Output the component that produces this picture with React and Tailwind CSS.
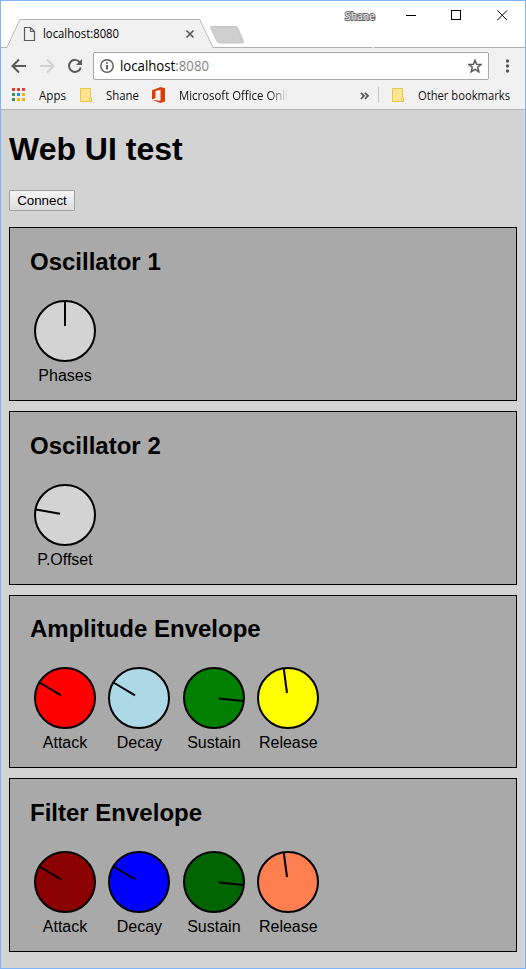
import React from "react";

const UI = "font-['Open_Sans',sans-serif]";

function Label({ width, className = "", children }) {
  return (
    <svg width={width} height="18" className={`shrink-0 overflow-visible ${UI} ${className}`}>
      <text x="0" y="13" fontSize="12" textLength={width} lengthAdjust="spacingAndGlyphs" fill="currentColor">
        {children}
      </text>
    </svg>
  );
}

function TitleBar() {
  return (
    <div className="relative h-[47px] bg-white">
      <svg width="524" height="47" className="absolute left-0 top-0" fill="none">
        <path d="M0 46.5H6L19 18.5H198.5L212 46.5H371.5M373 46.5H524" stroke="#b0b0b0" />
        <path d="M6.5 47L19.3 19H198.2L211.5 47Z" fill="#f1f1f1" />
        <path d="M209.500 26.500Q208.500 25.500 210.500 25.500H234.500Q236 25.500 236.800 27L242.500 40.500Q243 42 241 42H218.500Q217 42 216 40.500Z" fill="#cfcfcf" stroke="#bdbdbd" strokeWidth=".8" />
        <path d="M23.500 26.500H29.500L33.500 30.500V39.500H23.500ZM29.500 26.500V30.500H33.500" stroke="#5a5a5a" strokeWidth="1.2" />
        <path d="M185.500 29.500L192.500 36.500M192.500 29.500L185.500 36.500" stroke="#5a5a5a" strokeWidth="1.700" />
        <path d="M405 14.500H415" stroke="#000" />
        <rect x="450.500" y="9.500" width="9" height="9" stroke="#000" />
        <path d="M496.500 9.500L506 19M506 9.500L496.500 19" stroke="#000" />
      </svg>
      <div className="relative flex h-full items-start pl-[42px] pt-[24px] text-black">
        <Label width={76}>localhost:8080</Label>
        <svg width="30" height="18" className={`-mt-[18px] ml-[226px] overflow-visible ${UI}`}>
          <text x="0" y="13" fontSize="11" textLength="30" lengthAdjust="spacingAndGlyphs" fill="#fff" stroke="#666" strokeWidth="2" paintOrder="stroke">Shane</text>
        </svg>
      </div>
    </div>
  );
}

function AddressRow() {
  return (
    <div className="flex h-[36px] items-start bg-[#f1f1f1] pt-[4px]">
      <svg width="92" height="28" fill="none" className="shrink-0">
        <path d="M25 14H12M18 7.500L11.500 14L18 20.500" stroke="#5a5a5a" strokeWidth="2" />
        <path d="M39 14H52M46 7.500L52.500 14L46 20.500" stroke="#d0d0d0" strokeWidth="2" />
        <path d="M79 10.500A6 6 0 1 0 79.800 15.500" stroke="#5a5a5a" strokeWidth="2" />
        <path d="M81 7V13H75Z" fill="#5a5a5a" />
      </svg>
      <div className="flex h-[28px] w-[396px] items-center rounded-[2px] border border-[#a9a9a9] bg-white pl-[6px] pr-[6px]">
        <svg width="14" height="14" viewBox="0 0 14 14" fill="none" stroke="#5a5a5a" className="shrink-0">
          <circle cx="7" cy="7" r="6.200" strokeWidth="1.400" />
          <path d="M7 6V10.500M7 3.300V4.800" strokeWidth="1.900" />
        </svg>
        <svg width="89" height="20" className={`ml-[6px] overflow-visible ${UI}`}>
          <text x="0" y="15" fontSize="14" textLength="89" lengthAdjust="spacingAndGlyphs" fill="#000">
            localhost<tspan fill="#858585">:8080</tspan>
          </text>
        </svg>
        <svg width="14" height="14" viewBox="0 0 14 14" fill="none" className="ml-auto">
          <path d="M7 1.300L8.600 5.200L13 5.500L9.700 8.300L10.800 12.700L7 10.300L3.200 12.700L4.300 8.300L1 5.500L5.400 5.200Z" stroke="#5a5a5a" strokeWidth="1.500" />
        </svg>
      </div>
      <svg width="36" height="28" fill="#5a5a5a">
        <circle cx="18.500" cy="9" r="1.700" />
        <circle cx="18.500" cy="14" r="1.700" />
        <circle cx="18.500" cy="19" r="1.700" />
      </svg>
    </div>
  );
}

function Folder({ className }) {
  return (
    <svg width="13" height="15" fill="#ffe593" stroke="#e7c64f" className={`shrink-0 ${className}`}>
      <path d="M.5 .5H10.500V10H11.500V13.500H.5Z" />
      <path d="M9.500 13.500V10.500Q9.500 9.500 10.500 9.500Q11.500 9.500 11.500 10.500V13.500Z" />
    </svg>
  );
}

const dots = ["#f0382e", "#f0382e", "#f0382e", "#2e9e57", "#2b80f5", "#f5b000", "#2e9e57", "#f5b000", "#f5b000"];

function Bookmarks() {
  return (
    <div className="flex h-[26px] items-start border-b border-[#b4b4b4] bg-[#f1f1f1] pt-[3px] text-[#111]">
      <div className="ml-[11px] mt-[1px] grid grid-cols-[3px_3px_3px] gap-[2px]">
        {dots.map((c, i) => (
          <span key={i} className="size-[3px]" style={{ backgroundColor: c }} />
        ))}
      </div>
      <Label width={27} className="ml-[14px]">Apps</Label>
      <Folder className="ml-[14px] mt-[1px]" />
      <Label width={33} className="ml-[13px]">Shane</Label>
      <svg width="14" height="16" viewBox="0 0 14 16" fill="#dc3e08" className="ml-[13px] shrink-0">
        <path d="M0 3.300L8.500 0L13 1.300V14.500L8.500 16L0 12.800L8.500 13.800V2.800L3.500 4V11L0 12.500Z" />
      </svg>
      <div className="ml-[13px] w-[109px] [mask-image:linear-gradient(to_right,black_82%,transparent_100%)]">
        <Label width={109}>Microsoft Office Onli</Label>
      </div>
      <svg width="10" height="8" fill="none" stroke="#5a5a5a" strokeWidth="1.800" className="ml-[72px] mt-[5px] shrink-0">
        <path d="M1 .8L4 3.800L1 6.800M5 .8L8 3.800L5 6.800" />
      </svg>
      <span className="ml-[8px] h-[16px] w-px shrink-0 bg-[#c4c4c4]" />
      <Folder className="ml-[13px] mt-[1px]" />
      <Label width={92} className="ml-[13px]">Other bookmarks</Label>
    </div>
  );
}

const pointers = {
  up: "M31 1V26",
  low: "M2 25.600L26 29.800",
  start: "M5.500 15.500L27 28.300",
  right: "M36 31.500L60.500 34",
  top: "M26.800 2L30 26",
};

function Knob({ fill, pointer, label }) {
  return (
    <div className="flex w-[62px] flex-col items-center">
      <svg width="62" height="62" stroke="#000" strokeWidth="2" className="shrink-0">
        <circle cx="31" cy="31" r="30" fill={fill} />
        <path d={pointers[pointer]} />
      </svg>
      <span className="mt-[5px] whitespace-nowrap text-[16px] leading-[18px]">{label}</span>
    </div>
  );
}

const envelope = (a, d, s, r) => [
  { label: "Attack", fill: a, pointer: "start" },
  { label: "Decay", fill: d, pointer: "start" },
  { label: "Sustain", fill: s, pointer: "right" },
  { label: "Release", fill: r, pointer: "top" },
];

const panels = [
  { title: "Oscillator 1", size: "h-[174px] pt-[20px]", knobs: [{ label: "Phases", fill: "lightgray", pointer: "up" }] },
  { title: "Oscillator 2", size: "h-[174px] pt-[20px]", knobs: [{ label: "P.Offset", fill: "lightgray", pointer: "low" }] },
  { title: "Amplitude Envelope", size: "h-[173px] pt-[19px]", knobs: envelope("red", "lightblue", "green", "yellow") },
  { title: "Filter Envelope", size: "h-[174px] pt-[20px]", knobs: envelope("darkred", "blue", "darkgreen", "coral") },
];

export default function App() {
  return (
    <div className="flex h-[969px] w-[526px] flex-col overflow-hidden border border-[#7db5f8] bg-[#d3d3d3] text-black">
      <TitleBar />
      <AddressRow />
      <Bookmarks />
      <main className="px-[8px] pt-[21px] font-['Liberation_Sans',Arial,sans-serif]">
        <h1 className="text-[32px] font-bold leading-[37px]">Web UI test</h1>
        <button className="mt-[22px] flex h-[21px] w-[66px] items-center justify-center rounded-[1px] border border-[#a0a0a0] bg-linear-to-b from-[#f6f6f6] to-[#dddddd] text-[13.333px] leading-[15px]">
          Connect
        </button>
        <div className="mt-[16px] flex flex-col gap-[10px]">
          {panels.map((p) => (
            <section key={p.title} className={`border border-black bg-[#a9a9a9] pl-[20px] ${p.size}`}>
              <h2 className="text-[24px] font-bold leading-[28px]">{p.title}</h2>
              <div className="mt-[24px] flex gap-[12.45px] pl-[4px]">
                {p.knobs.map((k) => (
                  <Knob key={k.label} {...k} />
                ))}
              </div>
            </section>
          ))}
        </div>
      </main>
    </div>
  );
}
